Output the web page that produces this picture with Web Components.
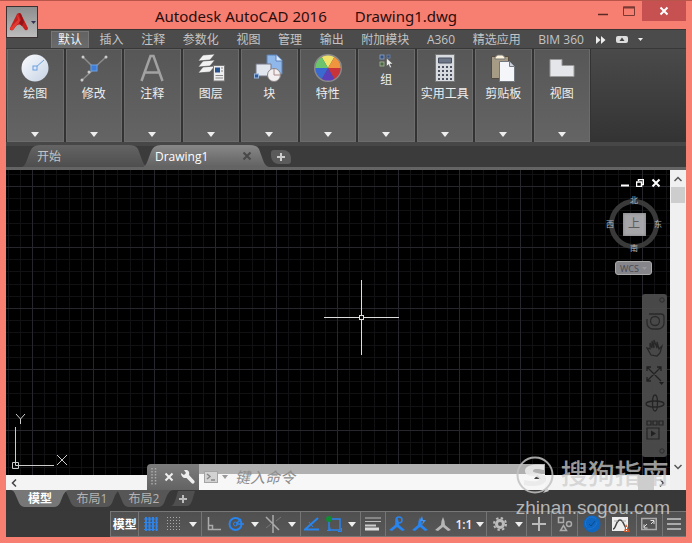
<!DOCTYPE html>
<html lang="zh-CN">
<head>
<meta charset="utf-8">
<title>Autodesk AutoCAD 2016</title>
<style>
html, body { height: 100%; margin: 0; }
body { font-family: "Open Sans", "Noto Sans CJK SC", sans-serif; font-size: 12px; color: #ddd; background: #f67f72; overflow: hidden; }
</style>
</head>
<body>
<cad-window></cad-window>
<script>
const BASE = `*{box-sizing:border-box}button,input{font:inherit;color:inherit;background:none;border:0;padding:0;margin:0}button{display:flex;align-items:center;justify-content:center;cursor:pointer}svg{display:block}`;
const def = (name, css, html) => customElements.define(name, class extends HTMLElement {
  connectedCallback() {
    if (this.shadowRoot) return;
    const root = this.attachShadow({ mode: 'open' });
    root.innerHTML = `<style>${BASE}${css}</style>${typeof html === 'function' ? html(this) : html}`;
  }
});

const dots = (n, x0, y0, step, fill) => Array.from({ length: n * n }, (_, i) => `<rect x="${x0 + (i % n) * step}" y="${y0 + Math.floor(i / n) * step}" width="1" height="1" fill="${fill}"/>`).join('');
const wheel = ['#f2e26a', '#f0953e', '#c8343a', '#5a3fb8', '#3a6ad0', '#6cc46c'].map((c, i) => {
  const p = a => [14 + 13 * Math.sin(a), 14 - 13 * Math.cos(a)].map(v => v.toFixed(2)).join(' ');
  const a = (i * 60 - 30) * Math.PI / 180;
  return `<path fill="${c}" d="M14 14L${p(a)}A13 13 0 0 1 ${p(a + Math.PI / 3)}Z"/>`;
}).join('');
const man = `<path d="M8 1L9.500 5L10 9L16 14L13 15L8 11L3 15L0 14L6 9L6.500 5Z" fill="currentColor"/>`;
const ICONS = {
  logo: [20, 22, `<path d="M8 3Q10 1 12 3L19 17Q19 20 16 19L13 15Q10 12 7 15L4 19Q0 20 1 17Z" fill="#c4201f"/><path d="M8 3L9 9L1 17Q1 20 4 19L7 15Q9 12 10 12L11 9Z" fill="#e03a33"/><path d="M10 2Q11 2 12 3L15 11L13 15L10 12L12 9Z" fill="#96131a"/>`],
  draw: [28, 28, `<defs><linearGradient id="d" x2="1" y2="1"><stop stop-color="#fafcff"/><stop offset="1" stop-color="#c6d2e4"/></linearGradient></defs><circle cx="14" cy="14" r="13.500" fill="url(#d)"/><path d="M14 14L23 6" stroke="#6b9ee0"/><rect x="12" y="12" width="4" height="4" fill="#dce8fa" stroke="#6b9ee0"/>`],
  modify: [28, 28, `<path d="M3 3L14 14L26 3M14 15L1 27" stroke="#8c8c8c" fill="none" stroke-width="1.500"/><g fill="#ccc"><circle cx="3" cy="3" r="1.500"/><circle cx="26" cy="3" r="1.500"/><circle cx="2" cy="26" r="1.500"/><circle cx="9" cy="18" r="1.500"/></g><rect x="11" y="11" width="6" height="6" fill="#3f7ed8" stroke="#6a9fe6"/>`],
  annotate: [28, 28, `<path d="M3.500 27L12.500 2H15.500L24.500 27M6.500 18.500H21.500" stroke="#a2a2a2" stroke-width="2.500" fill="none"/>`],
  layers: [28, 28, `<g fill="#f1f1f1" stroke="#4a4a4a" stroke-width=".6"><path d="M6 13L18 12L13 18L1 19Z"/><path d="M6 7L18 6L13 12L1 13Z"/><path d="M6 1L18 0L13 6L1 7Z"/></g><rect x="16.500" y="11.500" width="11" height="15.500" fill="#eee" stroke="#777"/><path d="M18 13.500h5v5h-5z" fill="#27538f"/><path d="M24 14h2M24 17h2M18.500 21.500h7.500M18.500 24h7.500" stroke="#888"/>`],
  block: [30, 28, `<path d="M13 1h10l5 5v14H13Z" fill="#8fb7ea" stroke="#5c82b8"/><path d="M22 1v6h6" fill="#dce9fb" stroke="#5c82b8"/><path d="M2 10h15v12H2Z" fill="#e1e6ee" stroke="#778"/><rect x=".5" y="20" width="4" height="4" fill="#315b96" stroke="#94b4dd"/><circle cx="20" cy="21" r="6.500" fill="#f2eff0" stroke="#8a8488"/><path d="M20 15v6h6" fill="none" stroke="#a88"/>`],
  props: [28, 28, `${wheel}<circle cx="14" cy="14" r="13.300" fill="none" stroke="#8a8a8a" stroke-width="1.400"/>`],
  group: [14, 14, `<rect x="1" y="1" width="4" height="4" fill="#31517e" stroke="#8ea6cc" stroke-width=".8"/><rect x="1" y="8" width="4" height="4" fill="#4c6646" stroke="#a9bb9a" stroke-width=".8"/><rect x="8" y="1" width="3" height="3" fill="#31517e" stroke="#6d85ad" stroke-width=".8"/><path d="M7.500 4v8.500l2-2L11 14l1.500-1-1.500-3H14Z" fill="#eee" stroke="#444" stroke-width=".5"/>`],
  calc: [28, 28, `<rect x="4.500" y=".5" width="19" height="27" fill="#d7dade" stroke="#777"/><path d="M7.500 4h13v5h-13z" fill="#6d7686" stroke="#485060"/>${[0,1,2,3].map(r => [0,1,2,3].map(c => `<rect x="${7 + c * 4}" y="${12 + r * 4}" width="2" height="2" fill="#4c5260"/>`).join('')).join('')}`],
  paste: [28, 28, `<path d="M2.500 2.500h17v22h-17z" fill="#a69c86" stroke="#544c40"/><path d="M6 3c1 0 2-2 3-2h4c1 0 2 2 3 2v2H6Z" fill="#fff5dc" stroke="#777"/><path d="M10.500 7.500h10l5 5v15h-15z" fill="#f4f6fa" stroke="#74787f"/><path d="M20.500 7.500v5h5" fill="#ccd2dd" stroke="#74787f"/>`],
  view: [28, 28, `<path d="M2 5.500h12v6h12v11H2z" fill="#e4e6e9" stroke="#999"/>`],
  caret: [8, 5, `<path d="M0 0H8L4 5Z" fill="currentColor"/>`],
  ff: [10, 8, `<path d="M0 0l4.500 4L0 8zM5 0l4.500 4L5 8z" fill="#eee"/>`],
  ribbonBox: [12, 7, `<rect width="12" height="7" rx="2" fill="#ddd"/><path d="M6 1.500L8.500 5H3.500Z" fill="#444"/>`],
  close: [10, 10, `<path d="M1.500 1.500l7 7m0-7l-7 7" stroke="currentColor" stroke-width="2"/>`],
  min: [12, 12, `<path d="M1 9.500h10" stroke="#5c2a26" stroke-width="1.500"/>`],
  max: [12, 10, `<path d="M.5 1h11v8.500H.500z" fill="none" stroke="#7a3a34"/><path d="M0 1.500h12" stroke="#7a3a34" stroke-width="2"/>`],
  vmin: [8, 8, `<path d="M0 6.500h8" stroke="#fff" stroke-width="2"/>`],
  vmax: [8, 8, `<path d="M2.500 2V.5h5v5H6M.5 3h5v4.500h-5z" fill="none" stroke="#fff" stroke-width="1.500"/>`],
  plus: [14, 14, `<path d="M7 0v14M0 7h14" stroke="currentColor" stroke-width="2"/>`],
  plusS: [8, 8, `<path d="M4 0v8M0 4h8" stroke="currentColor" stroke-width="2"/>`],
  up: [8, 6, `<path d="M.5 5L4 1.500L7.500 5" fill="none" stroke="#555" stroke-width="1.500"/>`],
  down: [8, 6, `<path d="M.5 1L4 4.500L7.500 1" fill="none" stroke="#555" stroke-width="1.500"/>`],
  left: [6, 8, `<path d="M5 .5L1.500 4L5 7.500" fill="none" stroke="#444" stroke-width="1.500"/>`],
  right: [6, 8, `<path d="M1 .5L4.500 4L1 7.500" fill="none" stroke="#444" stroke-width="1.500"/>`],
  grip: [6, 18, `<path d="M1 0v18M4.500 0v18" stroke="#aaa" stroke-width="1.500" stroke-dasharray="1.500 1.500"/>`],
  wrench: [14, 14, `<path d="M0 3L3 5L5 3L3 0C7-1 9 2 8 5L13.500 11C14 13 12.500 14 11 13.500L5.500 8C2 8.500 0 6 0 3Z" fill="#eee"/>`],
  prompt: [14, 12, `<rect x=".5" y=".5" width="13" height="11" fill="#d2d2d2" stroke="#a4a4a4"/><path d="M3 3l3 2.500L3 8M7 9h4" fill="none" stroke="#888" stroke-width="1.500"/>`],
  gridOn: [14, 14, `<path d="M2 0v14M5.500 0v14M9 0v14M12.500 0v14" stroke="#2f82e6" stroke-width="2"/><path d="M0 2h14M0 5.500h14M0 9h14M0 12.500h14" stroke="#2f82e6" stroke-dasharray="2 1"/>`],
  snap: [14, 14, dots(5, 0, 0, 3, '#aaa')],
  ortho: [14, 14, `<path d="M1.500 0v12.500H14M1.500 8.500h4v4" fill="none" stroke="#aaa" stroke-width="1.500"/>`],
  polar: [16, 16, `<circle cx="7.500" cy="8" r="6" fill="none" stroke="#2884ee" stroke-width="2"/><circle cx="7.500" cy="8" r="2" fill="none" stroke="#2884ee"/><path d="M8 8h8M9 7l4-4" stroke="#2884ee" stroke-width="1.500"/>`],
  iso: [18, 18, `<path d="M9 0v18M2 2l13 13" stroke="#aaa" stroke-width="1.500"/><path d="M2 13l5-4M12 6l5-4" stroke="#777"/>`],
  otrack: [16, 16, `<path d="M14 2L1 13.500H15" fill="none" stroke="#2884ee" stroke-width="2"/><path d="M5 6l4 5M9 6l-2 3" stroke="#2884ee"/>`],
  osnap: [16, 16, `<rect x="3" y="3" width="11" height="11" fill="none" stroke="#2884ee" stroke-width="1.500"/><path d="M1 14.500h3v-3M12 15.500h3.500V12" stroke="#2884ee" fill="none"/><circle cx="3" cy="3" r="3" fill="#108c34"/>`],
  lwt: [16, 14, `<path d="M0 1h16M0 4.500h16" stroke="#bbb"/><path d="M0 8.500h11" stroke="#ccc" stroke-width="2"/><path d="M0 12h14" stroke="#ddd" stroke-width="3"/>`],
  man1: [16, 16, `<g color="#2884ee">${man}<circle cx="10" cy="4" r="3" fill="none" stroke="#2884ee" stroke-width="1.500"/></g>`],
  man2: [16, 16, `<g color="#2884ee">${man}<path d="M10 0l-2 5h3l-1 4 4-5h-3z" fill="#3f94f4"/></g>`],
  man3: [16, 16, `<g color="#b5b5b5">${man}</g>`],
  gear: [14, 14, `<circle cx="7" cy="7" r="3.500" fill="none" stroke="#bbb" stroke-width="3"/><circle cx="7" cy="7" r="6" fill="none" stroke="#bbb" stroke-width="2" stroke-dasharray="2.400 2.312"/>`],
  shapes: [16, 16, `<g fill="none" stroke="#aaa" stroke-width="1.500"><path d="M1.500 1.500h5v5h-5zM6.500 9.500l3 5h-6z"/><circle cx="12" cy="8" r="2.500"/></g>`],
  hw: [18, 18, `<circle cx="9" cy="9" r="8.500" fill="#0f66c0"/><path d="M4 12A6 6 0 0 1 13 4M5 14A8 8 0 0 0 14 7" fill="none" stroke="#1f74cc"/><path d="M6 9l2 2 4-5" fill="none" stroke="#0a4b8a"/>`],
  chart: [18, 17, `<path d="M0 1h16v14H0z" fill="#eee"/><path d="M1 13C4 13 4 4 8 4S12 12 15 13" fill="none" stroke="#444" stroke-width="1.500"/><path d="M2 5h4M10 5h4" stroke="#aaa"/><path d="M14 8l4 8h-6z" fill="#d75724"/><path d="M14.500 11v2M14.500 14v1" stroke="#fff"/>`],
  expand: [16, 14, `<rect x=".750" y="1.500" width="14.500" height="11" fill="none" stroke="#aaa" stroke-width="1.500"/><path d="M3 10l3-3M3 7.500V11h3.500M13 4l-3 3M9.500 3.500H13V7" stroke="#ddd" fill="none"/>`],
  menu: [14, 14, `<path d="M0 2h14M0 7h14M0 12h14" stroke="#aaa" stroke-width="2"/>`],
  orbitWheel: [20, 20, `<path d="M4 3h12a3 3 0 0 1 3 3v6a6 6 0 0 1-6 6H8a6 6 0 0 1-6-6V8" fill="none" stroke="#2e2e2e" stroke-width="1.300"/><circle cx="10" cy="10" r="4.500" fill="none" stroke="#2e2e2e" stroke-width="1.300"/>`],
  hand: [18, 18, `<path d="M5 16L1 9l3 1V4l2 5V2l2 7V1l3 8V3l2 7 3-3-2 7-3 3Z" fill="none" stroke="#2b2b2b" stroke-width="1.200"/>`],
  zoomAll: [20, 20, `<path d="M2 2l14 14M16 2L2 16M2 6V2h4M12 2h4v4M2 12v4h4" fill="none" stroke="#252525" stroke-width="1.300"/><path d="M14 17h5l-2.500 3z" fill="#222"/>`],
  orbit: [20, 18, `<ellipse cx="10" cy="10" rx="9" ry="3" fill="none" stroke="#282828" stroke-width="1.300"/><ellipse cx="10" cy="9" rx="2.500" ry="8" fill="none" stroke="#282828" stroke-width="1.300"/>`],
  motion: [18, 20, `<path d="M1 1h4v4H1zM7 1h4v4H7zM13 1h4v4h-4zM1 8h12v11H1z" fill="none" stroke="#292929" stroke-width="1.200"/><path d="M5 10.500l5 3-5 3z" fill="#252525"/>`],
  ring: [6, 6, `<circle cx="3" cy="3" r="2.200" fill="none" stroke="#333"/>`]
};
def('ui-icon', `:host{display:inline-block;flex:none}`, el => {
  const [w, h, body] = ICONS[el.getAttribute('name')];
  return `<svg width="${w}" height="${h}" viewBox="0 0 ${w} ${h}" aria-hidden="true">${body}</svg>`;
});

def('title-bar', `
:host{display:flex;height:28px;color:#2a0e0c;position:relative}
h1{flex:1;margin:0;padding-left:16px;font-size:15px;line-height:30px;font-weight:400;text-align:center;font-family:"Noto Sans","Noto Sans CJK SC",sans-serif;white-space:pre}
h1 span{margin-left:28px}
.app{position:absolute;left:0;top:5px;width:32px;height:32px;z-index:2;background:linear-gradient(#8d8d8d,#bcbcbc);border:1px solid #3c3030;gap:2px}
.c{height:20px;width:26px}
.x{width:44px;background:#c75050;color:#fff}`,
`<button class="app" aria-label="应用程序菜单"><ui-icon name="logo"></ui-icon><svg width="5" height="3"><path d="M0 0h5L2.500 3z" fill="#335"/></svg></button>
<h1>Autodesk AutoCAD 2016<span>Drawing1.dwg</span></h1>
<button class="c" aria-label="最小化"><ui-icon name="min"></ui-icon></button><button class="c" aria-label="最大化"><ui-icon name="max"></ui-icon></button><button class="c x" aria-label="关闭"><ui-icon name="close"></ui-icon></button>`);

def('ribbon-tab', `:host{display:block}button{height:17px;padding:0 7px;white-space:nowrap;color:#c4c4c4;line-height:16px}
:host([active]) button{background:linear-gradient(#626262,#6b6b6b);border:1px solid #777;border-bottom:0;color:#f2f2f2;padding:0 6px}`, `<button><slot></slot></button>`);

def('ribbon-tabs', `:host{display:flex;height:20px;align-items:flex-end;background:#4b4b4b;border-top:1px solid #3d3434;border-bottom:1px solid #383838;padding-left:45px}
nav{display:flex;flex:0 1 540px;justify-content:space-between}
.e{height:17px}.e+.e{margin-left:10px}.e:first-of-type{margin-left:5px}`,
`<nav>${['默认','插入','注释','参数化','视图','管理','输出','附加模块','A360','精选应用','BIM 360'].map((t, i) => `<ribbon-tab${i ? '' : ' active'}>${t}</ribbon-tab>`).join('')}</nav>
<button class="e" aria-label="更多"><ui-icon name="ff"></ui-icon></button><button class="e" aria-label="最小化功能区"><ui-icon name="ribbonBox"></ui-icon></button><button class="e" aria-label="选项"><svg width="5" height="3"><path d="M0 0h5L2.500 3z" fill="#eee"/></svg></button>`);

def('ribbon-panel', `:host{display:block;min-width:0}
button{width:100%;height:100%;flex-direction:column;justify-content:flex-start;padding:4px 0 4px;background:linear-gradient(#575757,#646464);border:1px solid #6c6c6c;border-top-color:#626262;color:#eee;white-space:nowrap}
span{line-height:16px;margin-top:4px}
.s{margin-top:auto}`, el => `<button><ui-icon name="${el.getAttribute('icon')}"></ui-icon><span><slot></slot></span><ui-icon class="s" name="caret"></ui-icon></button>`);

def('ribbon-bar', `:host{display:block;height:93px;background:linear-gradient(#4a4a4a,#333);padding-left:1px}
div{display:grid;grid-template-columns:repeat(10,1fr);gap:2px;max-width:584px;height:100%;background:#333;padding-right:1px}`,
`<div>${[['draw','绘图'],['modify','修改'],['annotate','注释'],['layers','图层'],['block','块'],['props','特性'],['group','组'],['calc','实用工具'],['paste','剪贴板'],['view','视图']].map(([i, t]) => `<ribbon-panel icon="${i}">${t}</ribbon-panel>`).join('')}</div>`);

def('file-tab', `:host{display:grid;height:22px;width:126px;color:#c4c4c4}
svg,button,.r{grid-area:1/1}svg{width:100%;height:22px}
.r{display:flex;align-items:center;justify-content:space-between;padding:0 17px 0 15px}
:host([active]) .r{color:#fff;padding-left:12px}
.x{color:#484848}`, el => { const a = el.hasAttribute('active'); return `<svg viewBox="0 0 126 22" preserveAspectRatio="none"><defs><linearGradient id="g" x2="0" y2="1"><stop stop-color="${a ? '#888' : '#646464'}"/><stop offset="1" stop-color="${a ? '#626262' : '#4e4e4e'}"/></linearGradient></defs><path d="M0 22C6 20 6 5 12 1.500Q14 0 18 0H106Q114 0 116 4L120 15Q122 21 126 22Z" fill="url(#g)"/></svg><div class="r"><button><slot></slot></button>${a ? '<button class="x" aria-label="关闭标签"><ui-icon name="close"></ui-icon></button>' : ''}</div>`; });

def('file-tabs', `:host{display:flex;height:28px;background:#3b3b3b;border-top:4px solid #474747;border-bottom:3px solid #646464;align-items:flex-end;padding-left:16px}
file-tab+file-tab{margin-left:-5px}
.p{width:20px;height:14px;margin:0 0 3px 2px;border-radius:3px 8px 3px 8px;background:#5b5b5b;color:#ccc}`,
`<file-tab>开始</file-tab><file-tab active>Drawing1</file-tab><button class="p" aria-label="新图形"><ui-icon name="plusS"></ui-icon></button>`);

def('view-cube', `:host{display:grid;grid-template-columns:10px 38px 10px;grid-template-rows:10px 38px 10px;place-items:center;color:#c8c8c8;font-size:8px;line-height:10px;opacity:.9}
svg{grid-area:1/1/4/4}
.n{grid-area:1/2}.w{grid-area:2/1}.e{grid-area:2/3}.s{grid-area:3/2}
button{grid-area:2/2;width:23px;height:23px;background:#b8b8bc;color:#666;font-size:12px;box-shadow:inset 0 0 3px #888}`,
`<svg width="50" height="50"><circle cx="25" cy="25" r="22.500" fill="none" stroke="#404040" stroke-width="5"/></svg><span class="n">北</span><span class="w">西</span><button>上</button><span class="e">东</span><span class="s">南</span>`);

def('nav-tools', `:host{display:flex;flex-direction:column;align-items:center;justify-content:space-between;width:25px;height:163px;padding:3px 0;border-radius:3px;background:#505050;opacity:.9}
button{width:100%}.e{justify-content:flex-end;padding-right:2px}`,
[['ring','关闭'],['orbitWheel','控制盘'],['hand','平移'],['zoomAll','缩放'],['orbit','动态观察'],['motion','运动'],['ring','自定义']].map(([i, t]) => `<button class="${i === 'ring' ? 'e' : ''}" aria-label="${t}"><ui-icon name="${i}"></ui-icon></button>`).join(''));

const minor = [12, 24, 37, 49].map(v => `M${v}.5 0V61M0 ${v}.5H61`).join('');
def('drawing-canvas', `:host{display:block;position:relative;background:#000;overflow:hidden;min-width:0}
.grid{width:100%;height:100%;position:absolute}
.ucs{position:absolute;left:5px;bottom:4px}
.cross{position:absolute;left:318px;top:110px}
.win{position:absolute;right:9px;top:8px;display:flex;gap:7px}
.win button:last-child{color:#fff}
view-cube{position:absolute;right:7px;top:25px}
.wcs{position:absolute;right:18px;top:91px;width:37px;height:14px;border-radius:3px;background:#85858a;border:1px solid #aaa;color:#4a4a54;font-size:9px;line-height:11px;gap:3px}
nav-tools{position:absolute;right:3px;top:124px}`,
`<svg class="grid"><defs><pattern id="p" x="26" y="16" width="61" height="61" patternUnits="userSpaceOnUse"><path d="${minor}" stroke="#111113"/><path d="M.5 0V61M0 .5H61" stroke="#26262c"/></pattern></defs><rect width="100%" height="100%" fill="url(#p)"/></svg>
<svg class="ucs" width="58" height="62" fill="none" stroke="#ccc"><path d="M4.500 18V56.500H43M1.500 53.500h6v6h-6zM5 5l4.500 5 4.500-5M9.500 10v5M46 46l10 10M56 46L46 56"/></svg>
<svg class="cross" width="75" height="75" fill="none" stroke="#ddd"><path d="M37.500 0v35M37.500 40v35M0 37.500h35M40 37.500h35"/><rect x="35.500" y="35.500" width="4" height="4"/></svg>
<div class="win"><button aria-label="最小化视口"><ui-icon name="vmin"></ui-icon></button><button aria-label="还原视口"><ui-icon name="vmax"></ui-icon></button><button aria-label="关闭视口"><ui-icon name="close"></ui-icon></button></div>
<view-cube></view-cube><button class="wcs">WCS <svg width="5" height="3"><path d="M0 0h5L2.500 3z" fill="#999"/></svg></button><nav-tools></nav-tools>`);

def('scroll-bar', `:host{display:flex;flex-direction:column;background:#f0f0f0}
button{height:17px}i{height:16px;background:#cdcdcd;margin:0 1px}b{flex:1}
:host([dir=h]){flex-direction:row;background:#f4f4f4}
:host([dir=h]) button{width:16px;height:100%}:host([dir=h]) i{width:16px;height:100%;margin:0}`,
el => el.getAttribute('dir') === 'h'
? `<button aria-label="向左"><ui-icon name="left"></ui-icon></button><b></b><i></i><button aria-label="向右"><ui-icon name="right"></ui-icon></button>`
: `<button aria-label="向上"><ui-icon name="up"></ui-icon></button><i></i><b></b><button aria-label="向下"><ui-icon name="down"></ui-icon></button>`);

def('command-line', `:host{display:flex;height:26px;border-radius:4px 0 0 0;overflow:hidden}
.t{display:flex;align-items:center;justify-content:space-between;width:52px;padding:0 4px 0 4px;background:linear-gradient(#7c7c7c,#636363);color:#eee}
.f{flex:1;display:flex;align-items:center;background:linear-gradient(#b0b0b0 0 10px,#f7f7f7 10px);padding:0 4px 0 5px;gap:4px}
input{flex:1;min-width:0;margin-left:3px;font-size:15px;font-style:italic;outline:0}input::placeholder{color:#8c8c8c;opacity:1}`,
`<div class="t"><ui-icon name="grip"></ui-icon><button aria-label="关闭"><ui-icon name="close"></ui-icon></button><button aria-label="自定义"><ui-icon name="wrench"></ui-icon></button></div>
<div class="f"><button aria-label="最近使用的命令"><ui-icon name="prompt"></ui-icon></button><svg width="6" height="4"><path d="M0 0h6L3 4z" fill="#999"/></svg><input aria-label="命令" placeholder="键入命令"><button aria-label="历史记录"><svg width="7" height="4"><path d="M0 4h7L3.500 0z" fill="#444"/></svg></button></div>`);

def('layout-tab', `:host{display:grid;width:58px;height:17px;color:#b4b4b4}
svg,button{grid-area:1/1}svg{width:100%;height:17px}button{line-height:16px}
:host([active]){color:#fff;font-weight:700;z-index:1}:host([add]){width:24px;height:15px;color:#bbb}:host([add]) svg.s{height:15px}`,
el => el.hasAttribute('add')
? `<svg class="s" viewBox="0 0 24 15" preserveAspectRatio="none"><path d="M0 15Q3 14 5 7L7 0H24L21 10Q19 15 16 15Z" fill="#4f4f4f"/></svg><button aria-label="新建布局"><ui-icon name="plusS"></ui-icon></button>`
: `<svg viewBox="0 0 58 17" preserveAspectRatio="none"><path d="M0 0H58Q54 0 51 8L49 13Q47 17 43 17H14Q10 17 8 13L5 6Q3 0 0 0Z" fill="${el.hasAttribute('active') ? '#777' : '#565656'}"/></svg><button><slot></slot></button>`);

def('layout-tabs', `:host{display:flex;height:21px;background:#383838;padding-left:5px}layout-tab+layout-tab{margin-left:-6px}layout-tab[add]{margin:1px 0 0 -2px!important}`,
`<layout-tab active>模型</layout-tab><layout-tab>布局1</layout-tab><layout-tab>布局2</layout-tab><layout-tab add></layout-tab>`);

const STATUS = [[28,'','模型',1],[24,'gridOn','栅格'],[22,'snap','捕捉'],[17,'caret','捕捉选项',1],[24,'ortho','正交'],[22,'polar','极轴'],[16,'caret','极轴选项'],[22,'iso','等轴测'],[16,'caret','等轴测选项',1],[23,'otrack','对象追踪'],[22,'osnap','对象捕捉'],[16,'caret','对象捕捉选项',1],[24,'lwt','线宽',1],[24,'man1','注释可见性'],[23,'man2','自动缩放'],[24,'man3','注释比例'],[18,'','1:1'],[14,'caret','比例选项',1],[26,'gear','工作空间'],[13,'caret','工作空间选项',1],[25,'plus','注释监视器',1],[26,'shapes','隔离对象',1],[27,'hw','硬件加速',1],[31,'chart','性能',1],[25,'expand','全屏显示',1],[24,'menu','自定义']];
def('status-bar', `:host{display:flex;height:26px;background:#393939;padding-left:104px}
div{display:flex;flex:1;min-width:0;background:linear-gradient(#505050,#575757);border:1px solid #777;border-width:1px 0 1px 1px}
button{min-width:0;color:#eee;white-space:nowrap}.s{border-right:1px solid #757575}.m{color:#fff;font-weight:700}.n{font-weight:600}ui-icon[name=plus]{color:#bbb}`,
`<div>${STATUS.map(([w, i, t, s], k) => `<button class="${s ? 's' : ''} ${i ? '' : k ? 'n' : 'm'}" style="flex:${w} ${w} 0" ${i ? `aria-label="${t}"` : ''}>${i ? `<ui-icon name="${i}"></ui-icon>` : t}</button>`).join('')}</div>`);

def('water-mark', `:host{display:grid;grid-template-columns:45px auto;color:rgba(205,205,205,.75);pointer-events:none;align-items:center;font-family:"Liberation Sans","Noto Sans CJK SC",sans-serif}
.t{font-size:27px;line-height:38px;font-weight:500;white-space:nowrap}.u{grid-column:1/3;font-size:19px;line-height:28px;color:rgba(205,205,205,.85)}`,
`<svg width="38" height="38" viewBox="0 0 38 38"><circle cx="19" cy="19" r="17.500" fill="none" stroke="#c2c2c2" stroke-width="2" opacity=".85"/><path d="M28 9C22 8 9 8 9 15S23 19 23 23S14 25 8 24V29C18 31 30 30 30 23S17 18 17 15S23 13 28 14Z" fill="#e9e9e9" opacity=".9"/><path d="M27 37L31 32L33 35Z" fill="#ccc"/></svg><span class="t">搜狗指南</span><span class="u">zhinan.sogou.com</span>`);

def('cad-window', `:host{display:flex;flex-direction:column;height:100vh;padding:0 6px 6px;background:#f67f72;border-top:1px solid #b9564c;position:relative;box-sizing:border-box}
.work{flex:1;min-height:0;display:grid;grid-template-columns:1fr 16px;grid-template-rows:1fr 15px;position:relative}
.v{grid-area:1/2/3/3;border-bottom:15px solid #f0f0f0}
command-line{position:absolute;left:141px;right:141px;bottom:0}
water-mark{position:absolute;right:22px;bottom:21px}`,
`<title-bar></title-bar><ribbon-tabs></ribbon-tabs><ribbon-bar></ribbon-bar><file-tabs></file-tabs>
<div class="work"><drawing-canvas></drawing-canvas><scroll-bar class="v"></scroll-bar><scroll-bar dir="h"></scroll-bar><command-line></command-line></div>
<layout-tabs></layout-tabs><status-bar></status-bar><water-mark></water-mark>`);
</script>
</body>
</html>
